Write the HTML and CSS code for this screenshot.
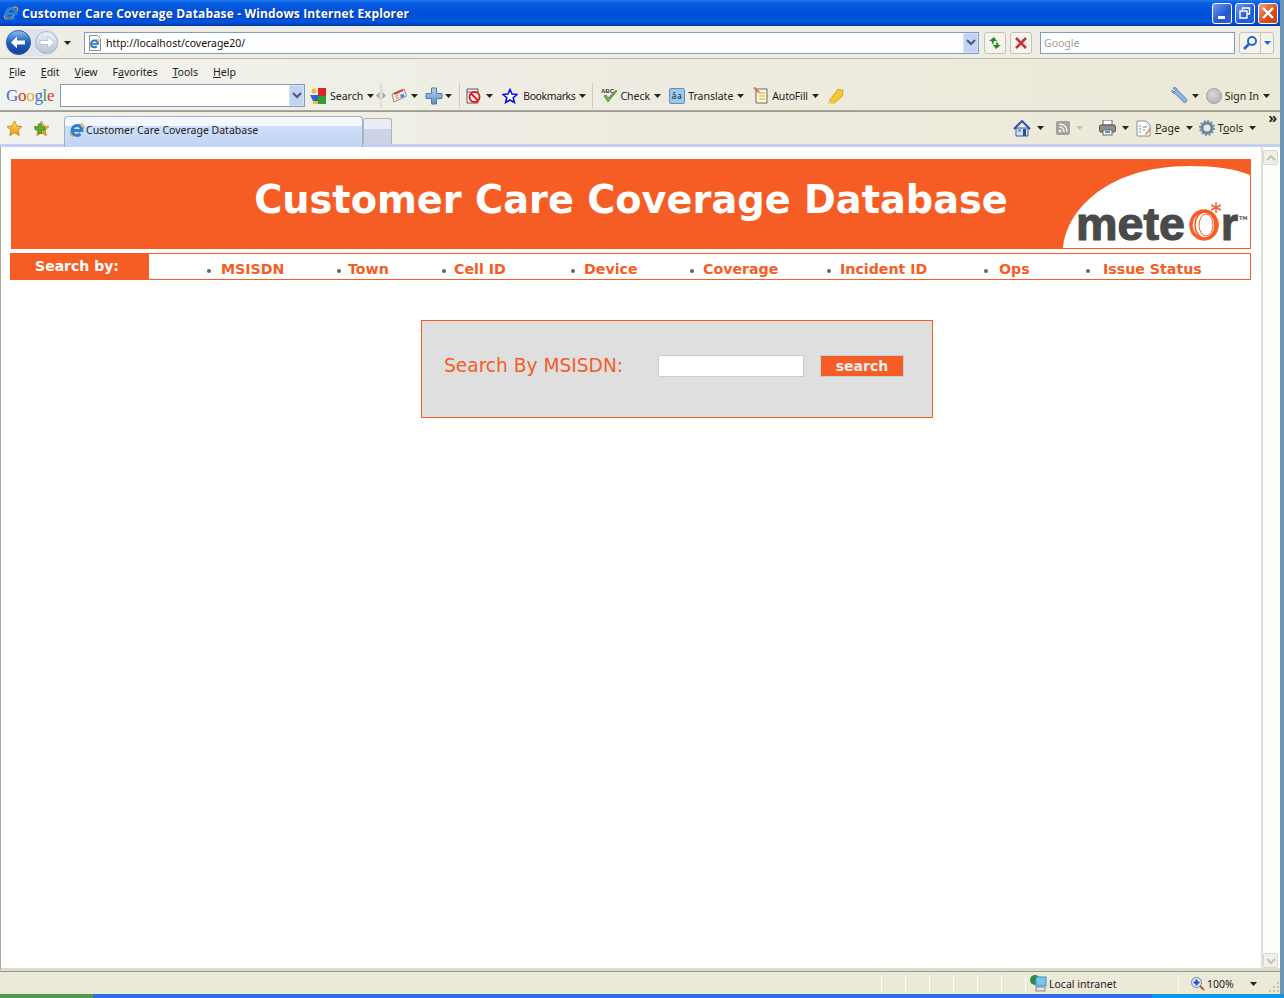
FILE: index.html
```html
<!DOCTYPE html>
<html lang="en">
<head>
    <meta charset="UTF-8">
    <title>Customer Care Coverage Database</title>
    <link rel="stylesheet" href="styles.css">
</head>
<body>
<svg class="defs" width="0" height="0">
    <defs>
        <linearGradient id="blueBall" x1="0" y1="0" x2="0" y2="1">
            <stop offset="0" stop-color="#8fc0ee"/>
            <stop offset="0.5" stop-color="#1f5fb8"/>
            <stop offset="1" stop-color="#123f96"/>
        </linearGradient>
        <linearGradient id="greyBall" x1="0" y1="0" x2="0" y2="1">
            <stop offset="0" stop-color="#eef2f7"/>
            <stop offset="1" stop-color="#b6c4d6"/>
        </linearGradient>
        <linearGradient id="gold" x1="0" y1="0" x2="0" y2="1">
            <stop offset="0" stop-color="#ffe16a"/>
            <stop offset="1" stop-color="#f0980f"/>
        </linearGradient>
        <linearGradient id="paleBlue" x1="0" y1="0" x2="0" y2="1">
            <stop offset="0" stop-color="#b4d2ec"/>
            <stop offset="1" stop-color="#5a90c4"/>
        </linearGradient>
        <symbol id="ie" viewBox="0 0 16 16">
            <ellipse cx="8" cy="8" rx="8" ry="3.600" transform="rotate(-40 8 8)" fill="none" stroke="#f0a020" stroke-width="1.300"/>
            <path d="M3 8.500h10a5 5 0 1 0-1.500 3.600" fill="none" stroke="#2b7fd4" stroke-width="2.800"/>
        </symbol>
        <symbol id="caret" viewBox="0 0 7 4">
            <path d="M0 0h7L3.500 4z" fill="#222"/>
        </symbol>
        <symbol id="chevron" viewBox="0 0 10 7">
            <path d="M1 1l4 4 4-4" fill="none" stroke="#45597c" stroke-width="2"/>
        </symbol>
    </defs>
</svg>

<div class="window">
    <div class="titlebar">
        <svg class="ico16"><use href="#ie"/></svg>
        <span class="title-text">Customer Care Coverage Database - Windows Internet Explorer</span>
        <div class="win-buttons">
            <span class="win-btn"><svg width="12" height="12" viewBox="0 0 12 12"><rect x="2" y="9" width="7" height="3" fill="#fff"/></svg></span>
            <span class="win-btn"><svg width="12" height="12" viewBox="0 0 12 12"><path d="M3.500 3V1h7v6H8.500M1 4h7v7H1z" fill="none" stroke="#fff" stroke-width="1.400"/></svg></span>
            <span class="win-btn win-close"><svg width="12" height="12" viewBox="0 0 12 12"><path d="M1 1l10 10M11 1L1 11" stroke="#fff" stroke-width="2.400"/></svg></span>
        </div>
    </div>

    <div class="navbar">
        <div class="nav-pill">
            <svg width="27" height="27" viewBox="0 0 27 27"><circle cx="13.500" cy="13.500" r="12" fill="url(#blueBall)" stroke="#2a5ea8"/><path d="M6 13.500l6-6v4h8v4h-8v4z" fill="#fff"/></svg>
            <svg width="25" height="25" viewBox="0 0 25 25"><circle cx="12.500" cy="12.500" r="11" fill="url(#greyBall)" stroke="#a5b4c8"/><path d="M20 12.500l-6-6v4H6v4h8v4z" fill="#fff" stroke="#a5b4c8" stroke-width=".7"/></svg>
        </div>
        <svg class="caret nav-caret"><use href="#caret"/></svg>
        <div class="address">
            <svg class="page-ico" width="16" height="16" viewBox="0 0 16 16"><path d="M2.500 .5h8l3 3v12h-11z" fill="#fff" stroke="#8d8d8d"/><use href="#ie" x="2" y="3" width="11" height="11"/></svg>
            <span class="address-text">http://localhost/coverage20/</span>
            <span class="combo-btn"><svg width="10" height="7"><use href="#chevron"/></svg></span>
        </div>
        <span class="small-btn btn-refresh"><svg width="16" height="14" viewBox="0 0 16 14"><path d="M7 1L2 5h2.500c.3 2 1 3 2 4-.2-1.500 0-3 1-4H10zM9 13l5-4h-2.500c-.3-2-1-3-2-4 .2 1.500 0 3-1 4H6z" fill="#2c8a2c"/></svg></span>
        <span class="small-btn"><svg width="14" height="14" viewBox="0 0 14 14"><path d="M2 2l10 10M12 2L2 12" stroke="#c8343c" stroke-width="2.600"/></svg></span>
        <div class="search-box">Google</div>
        <div class="search-go">
            <span class="go-main"><svg width="16" height="16" viewBox="0 0 16 16"><circle cx="10" cy="6" r="4" fill="#fff" stroke="#1f63d8" stroke-width="2"/><path d="M7 9l-5 5" stroke="#1f63d8" stroke-width="2.600"/></svg></span>
            <span class="go-drop"><svg width="7" height="4" viewBox="0 0 7 4"><path d="M0 0h7L3.500 4z" fill="#1f63d8"/></svg></span>
        </div>
    </div>

    <div class="menubar">
        <span class="menu-item"><u>F</u>ile</span>
        <span class="menu-item"><u>E</u>dit</span>
        <span class="menu-item"><u>V</u>iew</span>
        <span class="menu-item">F<u>a</u>vorites</span>
        <span class="menu-item"><u>T</u>ools</span>
        <span class="menu-item"><u>H</u>elp</span>
    </div>

    <div class="googlebar">
        <span class="google-logo"><b class="g-b">G</b><b class="g-r">o</b><b class="g-y">o</b><b class="g-b">g</b><b class="g-g">l</b><b class="g-r">e</b></span>
        <div class="google-input">
            <span class="combo-btn"><svg width="10" height="7"><use href="#chevron"/></svg></span>
        </div>
        <div class="tool t-search">
            <svg width="16" height="16" viewBox="0 0 16 16"><rect x="8" y="0" width="8" height="8" fill="#d8242c"/><circle cx="4" cy="3" r="2.500" fill="#f0c020"/><path d="M0 7h8v6H3z" fill="#2b62d8"/><rect x="8" y="8" width="8" height="8" fill="#2f9e38"/><path d="M3 13h5v3H3z" fill="#f0c020"/></svg>
            <span>Search</span><svg class="caret"><use href="#caret"/></svg>
        </div>
        <svg class="grip" width="10" height="25" viewBox="0 0 10 25"><path d="M5 0v25" stroke="#cfccba"/><path d="M3.500 9v7L0 12.500zM6.500 9v7l3.500-3.500z" fill="#a9a89c"/></svg>
        <div class="tool t-news">
            <svg width="16" height="16" viewBox="0 0 16 16"><path d="M1 6l12-5 2.500 7L3 14z" fill="#f6eeee" stroke="#8c8c8c"/><path d="M3 6l9-3.800" stroke="#d63b3b" stroke-width="2"/><path d="M4 8.500l3-1.200M5 10.500l3-1.200" stroke="#e0a030" stroke-width="1.300"/><path d="M9 7l3.500-1.400 1 3L10 10z" fill="#4a8ad8"/></svg>
            <svg class="caret"><use href="#caret"/></svg>
        </div>
        <div class="tool t-plus">
            <svg width="18" height="18" viewBox="0 0 18 18"><path d="M6.500 1h5v5.500H17v5h-5.500V17h-5v-5.500H1v-5h5.500z" fill="url(#paleBlue)" stroke="#4d7cab"/></svg>
            <svg class="caret"><use href="#caret"/></svg>
        </div>
        <span class="vsep"></span>
        <div class="tool t-block">
            <svg width="16" height="16" viewBox="0 0 16 16"><path d="M1 1h11v14H1z" fill="#fff" stroke="#555"/><path d="M1 4h11" stroke="#555"/><circle cx="8.500" cy="9" r="5" fill="#fff" stroke="#e01a1a" stroke-width="2"/><path d="M5 5.500l7 7" stroke="#e01a1a" stroke-width="2"/></svg>
            <svg class="caret"><use href="#caret"/></svg>
        </div>
        <div class="tool t-book">
            <svg width="16" height="16" viewBox="0 0 16 16"><path d="M8 1.500l2 4.500 5 .5-3.800 3.200 1.200 4.800L8 12l-4.400 2.500 1.200-4.800L1 6.500 6 6z" fill="#fff" stroke="#1010e0" stroke-width="1.600"/></svg>
            <span>Bookmarks</span><svg class="caret"><use href="#caret"/></svg>
        </div>
        <span class="vsep"></span>
        <div class="tool t-check">
            <svg width="17" height="17" viewBox="0 0 17 17"><text x="0" y="6" class="abc">ABC</text><path d="M3 9l2-1 2 3 8-8 1 1-9 11z" fill="#7bae55" stroke="#4b7a33" stroke-width=".7"/></svg>
            <span>Check</span><svg class="caret"><use href="#caret"/></svg>
        </div>
        <div class="tool t-translate">
            <span class="translate-ico">âa</span>
            <span>Translate</span><svg class="caret"><use href="#caret"/></svg>
        </div>
        <div class="tool t-autofill">
            <svg width="17" height="17" viewBox="0 0 17 17"><path d="M4 2h11v14H4z" fill="#fbf8e8" stroke="#666"/><path d="M7 6h6M7 9h6M7 12h6" stroke="#f0c830" stroke-width="1.600"/><path d="M1 1l2-1 5 5-2 1z" fill="#e0705a"/></svg>
            <span>AutoFill</span><svg class="caret"><use href="#caret"/></svg>
        </div>
        <div class="tool t-marker">
            <svg width="16" height="16" viewBox="0 0 16 16"><path d="M10 1l5 1.500-.5 5.500-7 6-4 .5-2-2z" fill="#f2c82e" stroke="#b98f14" stroke-width=".7"/><path d="M0 15h8" stroke="#f2d040" stroke-width="1.500"/></svg>
        </div>
        <div class="googlebar-right">
            <div class="tool">
                <svg width="17" height="17" viewBox="0 0 17 17"><path d="M2 1c2-1 4 0 4.500 2L15 11.500c1 1 1 2.500 0 3.500s-2.500.5-3-.5L4 6.500C2 6.500.5 5 1 3l2 2 1.500-1.500z" fill="#8db6e0" stroke="#3f74ae" stroke-width=".8"/></svg>
                <svg class="caret"><use href="#caret"/></svg>
            </div>
            <div class="tool t-signin">
                <span class="signin-dot"></span>
                <span>Sign In</span><svg class="caret"><use href="#caret"/></svg>
            </div>
        </div>
    </div>

    <div class="tabbar">
        <svg class="fav-ico" width="17" height="17" viewBox="0 0 17 17"><path d="M8.500 1l2.300 5 5.200.6-3.900 3.500 1.100 5.400-4.700-2.700-4.700 2.700 1.100-5.400L1 6.600 6.200 6z" fill="url(#gold)" stroke="#c07a10" stroke-width=".8"/></svg>
        <svg class="fav-add" width="17" height="17" viewBox="0 0 17 17"><path d="M8.500 1l2.300 5 5.200.6-3.900 3.500 1.100 5.400-4.700-2.700-4.700 2.700 1.100-5.400L1 6.600 6.200 6z" fill="url(#gold)" stroke="#c07a10" stroke-width=".8"/><path d="M5.500 4h3v3H12v3H8.500v3.500h-3V10H2V7h3.500z" fill="#56b33c" stroke="#2f7d22" stroke-width=".7"/></svg>
        <div class="tab">
            <svg class="ico16"><use href="#ie"/></svg>
            <span>Customer Care Coverage Database</span>
        </div>
        <div class="tab-new"></div>
        <div class="cmd-bar">
            <div class="cmd c-home">
                <svg width="18" height="17" viewBox="0 0 18 17"><path d="M3 8h12v8H3z" fill="#d6e2f2" stroke="#3d5f9a"/><path d="M1 9l8-8 8 8" fill="none" stroke="#3050a8" stroke-width="2"/><rect x="5" y="9" width="3" height="3" fill="#7da3d8"/><rect x="10" y="9" width="3" height="7" fill="#2a4f96"/></svg>
                <svg class="caret"><use href="#caret"/></svg>
            </div>
            <div class="cmd c-feed">
                <svg width="14" height="14" viewBox="0 0 14 14"><rect width="14" height="14" rx="2" fill="#a2a297"/><circle cx="4" cy="10" r="1.500" fill="#eee"/><path d="M3 6c3 0 5 2 5 5M3 3c5 0 8 3 8 8" fill="none" stroke="#eee" stroke-width="1.500"/></svg>
                <svg class="caret caret-off"><use href="#caret"/></svg>
            </div>
            <div class="cmd c-print">
                <svg width="17" height="16" viewBox="0 0 17 16"><rect x="4" y="0" width="9" height="5" fill="#fff" stroke="#666"/><rect x="0.500" y="5" width="16" height="7" rx="1.500" fill="#8d8f92" stroke="#555"/><rect x="4" y="10" width="9" height="5" fill="#fff" stroke="#666"/><rect x="6" y="11" width="5" height="2" fill="#3ea0cc"/></svg>
                <svg class="caret"><use href="#caret"/></svg>
            </div>
            <div class="cmd c-page">
                <svg width="16" height="17" viewBox="0 0 16 17"><path d="M1 1h9l4 4v11H1z" fill="#fdfdfd" stroke="#8e8e8e"/><path d="M3 6h2M3 9h2M3 12h2M7 7h4M7 10h2" stroke="#6a7fa8"/><path d="M9 14l5-6 1 1-5 6z" fill="#dc8a24"/></svg>
                <span><u>P</u>age</span><svg class="caret"><use href="#caret"/></svg>
            </div>
            <div class="cmd c-tools">
                <svg width="16" height="16" viewBox="0 0 16 16"><circle cx="8" cy="8" r="5" fill="none" stroke="#5f87ac" stroke-width="3"/><circle cx="8" cy="8" r="7" fill="none" stroke="#7a94ac" stroke-width="2" stroke-dasharray="2 1.670"/></svg>
                <span>T<u>o</u>ols</span><svg class="caret"><use href="#caret"/></svg>
            </div>
            <span class="cmd-more">»</span>
        </div>
    </div>

    <div class="viewport">
        <div class="page">
            <div class="banner">
                <h1>Customer Care Coverage Database</h1>
                <svg class="logo" width="188" height="83" viewBox="0 0 188 83">
                    <path d="M1 83C3 50 40 1 128 1c25 0 46 3 60 9v73z" fill="#fff"/>
                    <text class="logo-text" x="14" y="75" textLength="109" lengthAdjust="spacingAndGlyphs">mete</text>
                    <text class="logo-text" x="159" y="75" textLength="17" lengthAdjust="spacingAndGlyphs">r</text>
                    <g fill="none" stroke="#f55d25">
                        <ellipse cx="142" cy="60" rx="13" ry="14" stroke-width="3.500"/>
                        <ellipse cx="143" cy="60" rx="10" ry="13" stroke-width="1.500"/>
                        <ellipse cx="144" cy="60" rx="7" ry="11" stroke-width="1"/>
                    </g>
                    <path d="M154 37v11M149 40l10 5M159 40l-10 5" stroke="#f55d25" stroke-width="1.400"/>
                    <text class="logo-tm" x="177" y="55">TM</text>
                </svg>
            </div>
            <div class="searchby">
                <div class="searchby-label">Search by:</div>
                <ul class="searchby-list">
                    <li><a>MSISDN</a></li>
                    <li><a>Town</a></li>
                    <li><a>Cell ID</a></li>
                    <li><a>Device</a></li>
                    <li><a>Coverage</a></li>
                    <li><a>Incident ID</a></li>
                    <li><a>Ops</a></li>
                    <li><a>Issue Status</a></li>
                </ul>
            </div>
            <div class="search-panel">
                <label for="msisdn">Search By MSISDN:</label>
                <input type="text" id="msisdn">
                <button>search</button>
            </div>
        </div>
        <div class="scrollbar">
            <span class="scroll-btn"><svg width="10" height="6" viewBox="0 0 10 6"><path d="M1 5l4-4 4 4" fill="none" stroke="#c3c3b4" stroke-width="2"/></svg></span>
            <span class="scroll-btn"><svg width="10" height="6" viewBox="0 0 10 6"><path d="M1 1l4 4 4-4" fill="none" stroke="#c3c3b4" stroke-width="2"/></svg></span>
        </div>
    </div>

    <div class="statusbar">
        <span class="status-cell"></span>
        <span class="status-cell"></span>
        <span class="status-cell"></span>
        <span class="status-cell"></span>
        <span class="status-cell"></span>
        <span class="status-cell"></span>
        <span class="status-zone">
            <svg width="17" height="17" viewBox="0 0 17 17"><circle cx="5" cy="5" r="5" fill="#2e8c4a"/><rect x="6" y="2" width="10" height="9" fill="#74c6ee" stroke="#4a8cc0"/><rect x="6" y="12" width="9" height="4" fill="#e2e2e6" stroke="#8a8a96"/></svg>
            Local intranet
        </span>
        <span class="status-zoom">
            <svg width="14" height="14" viewBox="0 0 14 14"><circle cx="5.500" cy="5.500" r="5" fill="#dfeafa" stroke="#6b83a8"/><path d="M5.500 2.500v6M2.500 5.500h6" stroke="#1c49c0" stroke-width="2"/><path d="M9 9l4 4" stroke="#a0662c" stroke-width="2"/></svg>
            100%
            <svg class="caret"><use href="#caret"/></svg>
        </span>
        <svg class="resize-grip" width="12" height="12" viewBox="0 0 12 12"><path d="M9 1h2v2H9zM5 5h2v2H5zM9 5h2v2H9zM1 9h2v2H1zM5 9h2v2H5zM9 9h2v2H9z" fill="#c4c2b0"/></svg>
    </div>
</div>

<div class="taskbar">
    <div class="start"></div>
    <div class="taskbar-apps"></div>
    <div class="taskbar-tray"></div>
</div>
</body>
</html>
```

FILE: styles.css
```css
html, body {
    margin: 0;
    padding: 0;
    height: 100%;
    overflow: hidden;
}
body {
    font-family: 'Noto Sans', sans-serif;
    font-size: 10.5px;
    color: #222;
    background: #6d93b5;
    width: 1284px;
    height: 998px;
}
.defs {
    display: block;
    height: 0;
}
svg {
    flex: none;
}
.ico16 {
    width: 16px;
    height: 16px;
}
.caret {
    width: 7px;
    height: 4px;
    margin-left: 5px;
}
.caret-off {
    opacity: .2;
}
.window {
    width: 1280px;
    height: 994px;
    display: flex;
    flex-direction: column;
    background: #ece9d8;
}

/* title bar */
.titlebar {
    height: 26px;
    flex: none;
    display: flex;
    align-items: center;
    padding-left: 3px;
    gap: 3px;
    background: linear-gradient(#1a7cf0 0, #0a5ce0 12%, #0050d8 50%, #0053dc 85%, #0038a8 100%);
}
.title-text {
    color: #fff;
    font-family: 'Open Sans', sans-serif;
    font-weight: 700;
    font-size: 12px;
    letter-spacing: .15px;
    text-shadow: 1px 1px 0 #0a2f90;
}
.win-buttons {
    margin-left: auto;
    display: flex;
    gap: 3px;
    padding-right: 2px;
}
.win-btn {
    width: 20px;
    height: 21px;
    box-sizing: border-box;
    border: 1px solid #fff;
    border-radius: 3px;
    display: flex;
    align-items: center;
    justify-content: center;
    background: linear-gradient(135deg, #6f9cf0, #2458d0 60%, #2a5ed8);
}
.win-close {
    background: linear-gradient(135deg, #f0a080, #d84c1c 60%, #c83c10);
}

/* address row */
.navbar {
    height: 33px;
    flex: none;
    display: flex;
    align-items: center;
    padding: 1px 4px 0 5px;
    box-sizing: border-box;
    background: #efeee6;
    border-bottom: 1px solid #b8b6a6;
}
.nav-pill {
    display: flex;
    align-items: center;
    width: 54px;
    height: 27px;
    background: #dfe3ea;
    border-radius: 14px;
}
.nav-pill svg + svg {
    margin-left: 2px;
}
.nav-caret {
    margin: 0 0 0 5px;
}
.address {
    margin-left: 13px;
    width: 895px;
    height: 22px;
    flex: none;
    box-sizing: border-box;
    border: 1px solid #7f9db9;
    background: #fff;
    display: flex;
    align-items: center;
    padding-left: 2px;
}
.address-text {
    margin-left: 3px;
    letter-spacing: -.04px;
    color: #111;
}
.combo-btn {
    margin-left: auto;
    width: 15px;
    height: 100%;
    display: flex;
    align-items: center;
    justify-content: center;
    background: #c3d3f4;
    border: 1px solid #d8e2f8;
    box-sizing: border-box;
}
.small-btn {
    width: 22px;
    height: 22px;
    box-sizing: border-box;
    border: 1px solid #c4c3b8;
    border-radius: 3px;
    background: #f4f3ec;
    display: flex;
    align-items: center;
    justify-content: center;
    margin-left: 4px;
}
.btn-refresh {
    margin-left: 5px;
}
.search-box {
    margin-left: 8px;
    width: 195px;
    height: 22px;
    box-sizing: border-box;
    border: 1px solid #7f9db9;
    background: #fff;
    color: #a0a0a0;
    line-height: 21px;
    padding-left: 3px;
}
.search-go {
    margin-left: 4px;
    display: flex;
    height: 22px;
    box-sizing: border-box;
    border: 1px solid #c4c3b8;
    border-radius: 3px;
    background: #f4f3ec;
}
.go-main {
    width: 20px;
    display: flex;
    align-items: center;
    justify-content: center;
    border-right: 1px solid #c4c3b8;
}
.go-drop {
    width: 12px;
    display: flex;
    align-items: center;
    justify-content: center;
}

/* menu + google toolbar */
.menubar {
    height: 25px;
    flex: none;
    display: flex;
    align-items: center;
    padding: 1px 0 0 9px;
    box-sizing: border-box;
    gap: 15px;
    background: linear-gradient(90deg, #f2f2ee, #eeece0 50%, #ece9d8);
}
.googlebar {
    height: 27px;
    flex: none;
    display: flex;
    align-items: center;
    padding: 0 0 3px 6px;
    box-sizing: border-box;
    background: linear-gradient(90deg, #f2f2ee, #eeece0 50%, #ece9d8);
    border-bottom: 1px solid #aca899;
}
.google-logo {
    font-family: 'Liberation Serif', serif;
    font-size: 17px;
    width: 54px;
    letter-spacing: -.3px;
}
.google-logo b {
    font-weight: 400;
}
.g-b { color: #3a6fd8; }
.g-r { color: #d6352c; }
.g-y { color: #e2b020; }
.g-g { color: #3c9a40; }
.google-input {
    width: 245px;
    height: 23px;
    box-sizing: border-box;
    border: 1px solid #7f9db9;
    background: #fff;
    display: flex;
    justify-content: flex-end;
}
.tool {
    display: flex;
    align-items: center;
    gap: 4px;
}
.tool .caret {
    margin-left: 0;
}
.t-search {
    margin-left: 5px;
}
.grip {
    margin-left: 2px;
}
.vsep {
    width: 1px;
    height: 25px;
    background: #cfccba;
}
.t-news {
    margin-left: 5px;
}
.t-plus {
    margin-left: 7px;
    gap: 2px;
}
.t-plus + .vsep {
    margin-left: 7px;
}
.t-block {
    margin-left: 6px;
}
.t-book {
    margin-left: 9px;
}
.t-book span {
    margin-left: 1px;
    letter-spacing: -.4px;
}
.t-book + .vsep {
    margin-left: 6px;
}
.t-check {
    margin-left: 8px;
}
.t-check span {
    margin-left: -2px;
}
.t-translate {
    margin-left: 8px;
}
.t-translate span + span {
    margin-left: -1px;
}
.t-autofill {
    margin-left: 8px;
}
.t-autofill span {
    margin-left: -1px;
    letter-spacing: -.2px;
}
.t-marker {
    margin-left: 9px;
}
.abc {
    font-size: 6px;
    font-weight: 700;
    font-family: 'Liberation Sans', sans-serif;
    fill: #333;
}
.translate-ico {
    width: 16px;
    height: 16px;
    box-sizing: border-box;
    background: #9cc8ec;
    border: 1px solid #5a90c4;
    border-radius: 2px;
    font-size: 8px;
    line-height: 14px;
    text-align: center;
    letter-spacing: 1px;
}
.googlebar-right {
    margin-left: auto;
    display: flex;
    gap: 7px;
    padding-right: 10px;
}
.t-signin {
    gap: 3px;
}
.t-signin .caret {
    margin-left: 1px;
}
.signin-dot {
    width: 16px;
    height: 16px;
    box-sizing: border-box;
    border-radius: 50%;
    background: radial-gradient(circle at 40% 35%, #d8d8d8, #a9a9a9);
    border: 1px solid #a0a0a0;
}

/* favourites, tabs, command bar */
.tabbar {
    height: 36px;
    flex: none;
    display: flex;
    align-items: flex-end;
    box-sizing: border-box;
    padding-left: 6px;
    background: linear-gradient(90deg, #f2f2ee, #eeece0 50%, #ece9d8);
    border-top: 1px solid #fff;
    border-bottom: 3px solid;
    border-image: linear-gradient(#9c9c94 33%, #c4d0f2 33%) 1;
}
.fav-ico,
.fav-add {
    align-self: center;
}
.fav-add {
    margin-left: 10px;
}
.tab {
    margin-left: 14px;
    margin-bottom: -3px;
    width: 299px;
    height: 31px;
    box-sizing: border-box;
    border: 1px solid #a5b0c0;
    border-bottom: 0;
    border-radius: 4px 4px 0 0;
    background: linear-gradient(#f4f8fd 30%, #cbe0f8 31%, #c4d4f4);
    display: flex;
    align-items: center;
    gap: 1px;
    padding: 0 0 5px 4px;
}
.tab-new {
    width: 29px;
    height: 26px;
    box-sizing: border-box;
    border: 1px solid #b0b4bc;
    border-bottom: 0;
    border-radius: 3px 3px 0 0;
    background: linear-gradient(#eaedf3 40%, #ccd3e6 41%);
}
.cmd-bar {
    margin-left: auto;
    align-self: stretch;
    display: flex;
    align-items: center;
    padding-right: 3px;
}
.cmd {
    display: flex;
    align-items: center;
    gap: 3px;
}
.cmd .caret {
    margin-left: 3px;
}
.c-feed {
    margin-left: 12px;
}
.c-print {
    margin-left: 16px;
}
.c-page {
    margin-left: 7px;
}
.c-tools {
    margin-left: 6px;
}
.cmd-more {
    align-self: flex-start;
    font-size: 14px;
    line-height: 12px;
    margin-left: 12px;
    font-weight: 700;
}

/* page */
.viewport {
    flex: 1;
    display: flex;
    min-height: 0;
    background: #fff;
    border-left: 1px solid #aca899;
    border-bottom: 3px solid #dcdcd4;
}
.page {
    width: 1260px;
    flex: none;
    box-sizing: border-box;
    padding: 12px 10px 0 9px;
    font-family: 'DejaVu Sans', sans-serif;
}
.scrollbar {
    width: 17px;
    background: #fdfdfa;
    border-left: 2px solid #dedfd8;
    box-sizing: border-box;
    display: flex;
    flex-direction: column;
    justify-content: space-between;
    align-items: center;
}
.scroll-btn {
    width: 15px;
    height: 15px;
    box-sizing: border-box;
    margin-top: 3px;
    border: 1px solid #d8d8cc;
    border-radius: 2px;
    background: #f0f0e8;
    display: flex;
    align-items: center;
    justify-content: center;
}
.banner {
    position: relative;
    margin-left: 1px;
    height: 90px;
    box-sizing: border-box;
    background: #f55d25;
    border: 1px solid #f55d25;
    display: flex;
    align-items: center;
    justify-content: center;
}
.banner h1 {
    margin: 0 0 10px;
    color: #fff;
    font-size: 38.3px;
    font-weight: 700;
}
.logo {
    position: absolute;
    right: 0;
    bottom: 0;
    overflow: visible;
}
.logo-text {
    font-family: 'Liberation Sans', sans-serif;
    font-weight: 700;
    font-size: 46px;
    fill: #4a4a4a;
    stroke: #4a4a4a;
    stroke-width: 1.2;
}
.logo-tm {
    font-size: 5px;
    font-weight: 700;
    fill: #555;
}
.searchby {
    margin-top: 4px;
    height: 27px;
    box-sizing: border-box;
    border: 1px solid #f55d25;
    display: flex;
}
.searchby-label {
    width: 138px;
    flex: none;
    box-sizing: border-box;
    padding-right: 6px;
    background: #f55d25;
    color: #fff;
    font-weight: 700;
    font-size: 14px;
    line-height: 25px;
    text-align: center;
}
.searchby-list {
    list-style: none;
    margin: 0;
    padding: 0;
    display: grid;
    grid-template-columns: 130px 105px 129px 119px 137px 157px 102px 1fr;
    grid-template-rows: 25px;
    padding-left: 58px;
    flex: 1;
}
.searchby-list li {
    display: flex;
    align-items: baseline;
    height: 31px;
    color: #f55d25;
    font-weight: 700;
    font-size: 14.2px;
    line-height: 31px;
}
.searchby-list li::before {
    content: "";
    width: 4px;
    height: 4px;
    border-radius: 50%;
    background: #666;
    margin-right: 9px;
    align-self: center;
    margin-top: 3px;
}
.searchby-list li:first-child::before {
    margin-right: 10px;
}
.searchby-list li:nth-child(2)::before { margin-right: 7px; }
.searchby-list li:nth-child(3)::before { margin-right: 8px; }
.searchby-list li:nth-child(7)::before { margin-right: 11px; }
.searchby-list li:nth-child(8)::before { margin-right: 13px; }
.search-panel {
    margin: 40px 0 0 411px;
    width: 512px;
    height: 98px;
    box-sizing: border-box;
    border: 1px solid #f55d25;
    background: #dfdfdf;
    display: flex;
    align-items: center;
    padding: 0 0 8px 22px;
}
.search-panel label {
    color: #f55d25;
    font-size: 18.6px;
    width: 214px;
    flex: none;
}
.search-panel input {
    width: 146px;
    height: 22px;
    box-sizing: border-box;
    border: 1px solid #c5ced6;
    background: #fff;
    margin: 2px 0 0;
    padding: 0;
}
.search-panel button {
    margin: 2px 0 0 16px;
    width: 84px;
    height: 22px;
    box-sizing: border-box;
    border: 1px solid #c5ced6;
    background: #f55d25;
    color: #eee;
    font-family: 'DejaVu Sans', sans-serif;
    font-weight: 700;
    font-size: 14px;
    padding: 0;
    line-height: 18px;
}

/* status + taskbar */
.statusbar {
    height: 23px;
    flex: none;
    display: flex;
    align-items: center;
    padding: 1px 0 0 881px;
    box-sizing: border-box;
    border-top: 1px solid #9c9a8c;
}
.status-cell {
    width: 24px;
    height: 18px;
    border-left: 1px solid #fbfaf2;
    box-sizing: border-box;
}
.status-zone {
    width: 154px;
    height: 18px;
    box-sizing: border-box;
    border-left: 1px solid #fbfaf2;
    border-right: 1px solid #fbfaf2;
    display: flex;
    align-items: center;
    gap: 2px;
    padding-left: 4px;
}
.status-zoom {
    display: flex;
    align-items: center;
    gap: 2px;
    padding-left: 12px;
}
.status-zoom .caret {
    margin-left: 14px;
}
.resize-grip {
    margin: 8px 0 0 auto;
    align-self: flex-start;
}
.taskbar {
    height: 4px;
    display: flex;
}
.start {
    width: 93px;
    background: #4f9a4f;
}
.taskbar-apps {
    width: 1059px;
    background: #2e6fe0;
}
.taskbar-tray {
    flex: 1;
    background: #1296e0;
}
```
